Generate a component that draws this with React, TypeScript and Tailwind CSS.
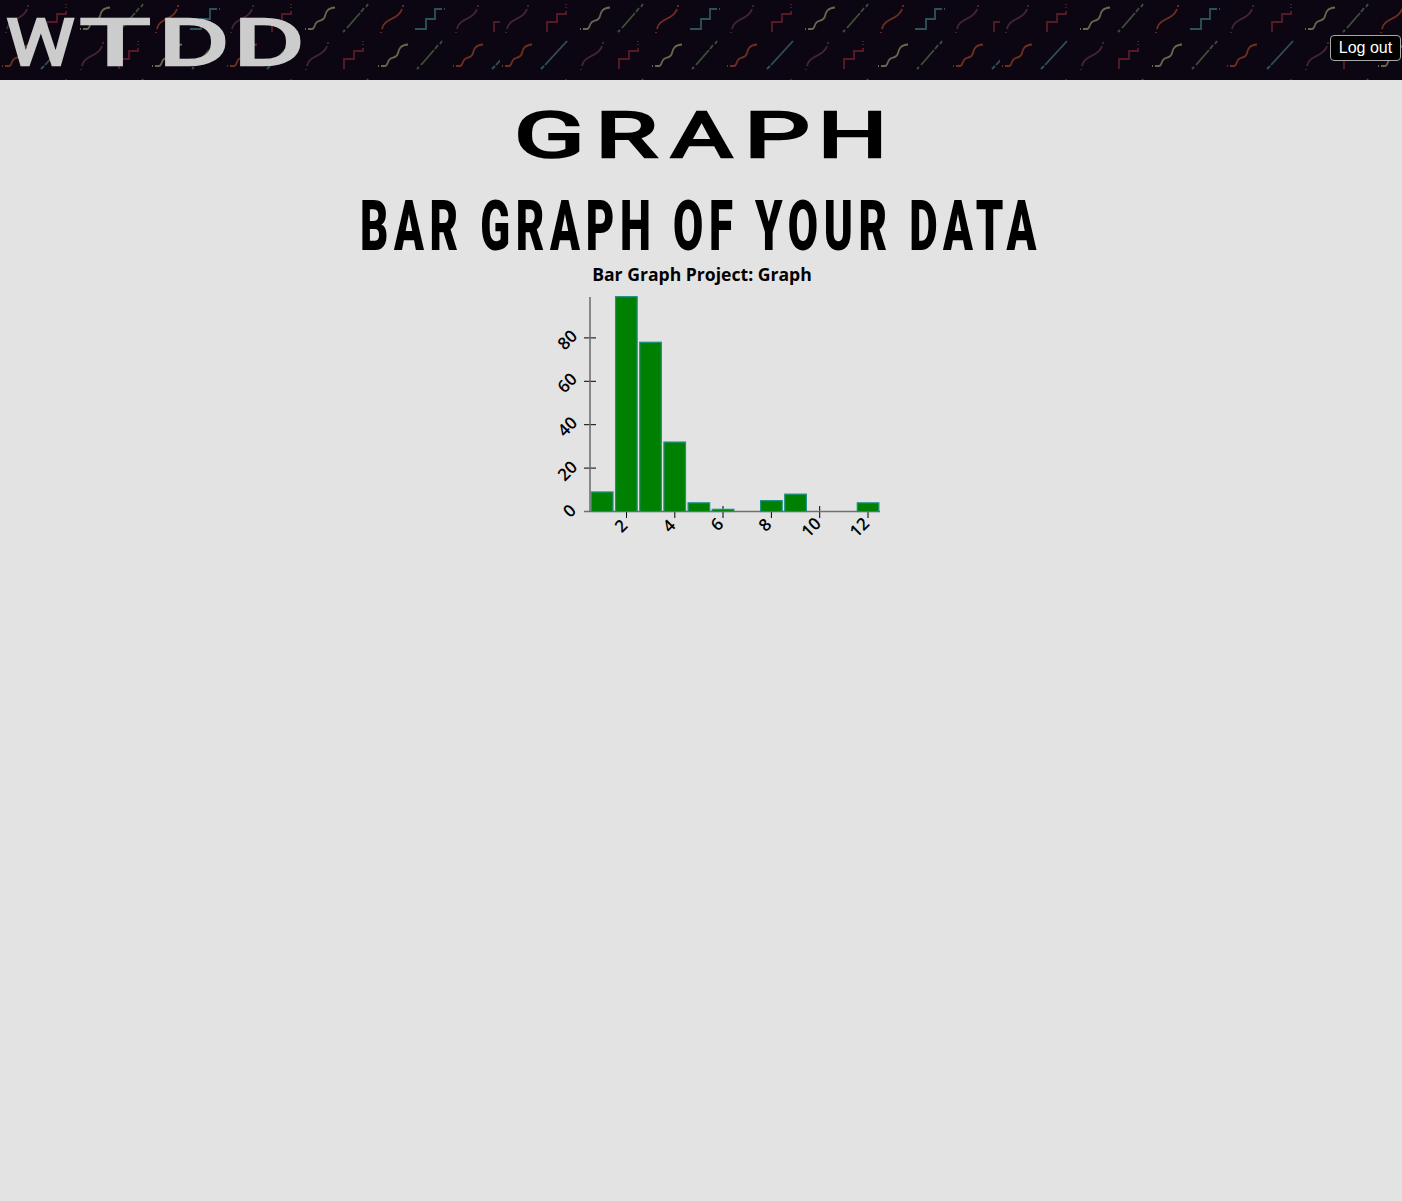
const topRow = [
    ['curve', 5, '#43262f'], ['stair', 46, '#571a24'], ['squiggle', 80, '#69664e'], ['line', 118, '#3d4f39'],
    ['curve', 155, '#6f2e1e'], ['stepRight', 190, '#2c5257'], ['curve', 230, '#43262f'], ['stair', 271, '#571a24'],
    ['squiggle', 305, '#69664e'], ['line', 343, '#3d4f39'], ['curve', 380, '#6f2e1e'], ['stepRight', 415, '#2c5257'],
    ['curve', 455, '#43262f'], ['stair', 493, '#571a24'],
];

const bottomRow = [
    ['squiggle', 2, '#6f2e1e'], ['solidLine', 41, '#2c5257'], ['curve', 80, '#43262f'], ['stair', 118, '#571a24'],
    ['squiggle', 152, '#69664e'], ['line', 192, '#3d4f39'], ['squiggle', 227, '#6f2e1e'], ['solidLine', 267, '#2c5257'],
    ['curve', 305, '#43262f'], ['stair', 343, '#571a24'], ['squiggle', 378, '#69664e'], ['line', 417, '#3d4f39'],
    ['squiggle', 453, '#6f2e1e'], ['solidLine', 492, '#2c5257'],
];

const shapes: Record<string, string> = {
    curve: 'M1 29v-1M2 25C3 18 10 16 15 13C20 10 21 8 22 5M23 3v-2',
    stair: 'M1 28V18H11V10H20V7M20 4V3M20 1V0',
    stepRight: 'M0 25H11V15H20V5H27M29 5H30',
    squiggle: 'M0 25H1M3 25H7C10 25 9 20 12 18C15 16 19 17 20 12C21 7 23 4 30 3.5',
    line: 'M0 28L2 26M4 24L17 9M18 8L21 4M23 3L25 0',
    solidLine: 'M0 28L3 25M4 24L26 0',
};

const bars = [9, 99, 78, 32, 4, 1, 0, 5, 8, 0, 0, 4];

const yTicks = [
    { label: '0', y: 510.5, lx: 569, ly: 509.5 },
    { label: '20', y: 467.1, lx: 567, ly: 469.5 },
    { label: '40', y: 423.7, lx: 567, ly: 425.2 },
    { label: '60', y: 380.3, lx: 566.7, ly: 381.5 },
    { label: '80', y: 336.9, lx: 567, ly: 338.5 },
];

const xTicks = [
    { label: '2', x: 626.5, lx: 620.5, ly: 524.5 },
    { label: '4', x: 674.8, lx: 668.5, ly: 524.5 },
    { label: '6', x: 723, lx: 716.7, ly: 523 },
    { label: '8', x: 771.4, lx: 764.5, ly: 523.5 },
    { label: '10', x: 819.7, lx: 810.7, ly: 526 },
    { label: '12', x: 868, lx: 859, ly: 526 },
];

const HeaderPattern = () => (
    <svg className="absolute inset-0 w-full h-full" aria-hidden="true">
        <defs>
            <pattern id="squiggles" width="500" height="75" patternUnits="userSpaceOnUse">
                {topRow.map(([shape, x, color], i) => (
                    <path key={i} d={shapes[shape as string]} transform={`translate(${x} 4)`} fill="none" stroke={color as string} strokeWidth="1.8" />
                ))}
                {bottomRow.map(([shape, x, color], i) => (
                    <path key={i} d={shapes[shape as string]} transform={`translate(${x} 41)`} fill="none" stroke={color as string} strokeWidth="1.8" />
                ))}
            </pattern>
        </defs>
        <rect width="100%" height="100%" fill="url(#squiggles)" />
    </svg>
);

const Chart = () => (
    <svg viewBox="501 260 400 290" className="w-[400px] h-[290px] block font-['Open_Sans',sans-serif]">
        <text x="702" y="280" textAnchor="middle" fontSize="17.6" fontWeight="700" fill="#000">Bar Graph Project: Graph</text>

        {yTicks.map(t => (
            <g key={t.label}>
                <line x1="584" x2="596" y1={t.y} y2={t.y} stroke="#000" />
                <text x={t.lx} y={t.ly} transform={`rotate(-45 ${t.lx} ${t.ly})`} textAnchor="middle" dominantBaseline="central" fontSize="17" fontWeight="600">{t.label}</text>
            </g>
        ))}
        {xTicks.map(t => (
            <g key={t.label}>
                <line x1={t.x} x2={t.x} y1="505" y2="517" stroke="#000" />
                <text x={t.lx} y={t.ly} transform={`rotate(-45 ${t.lx} ${t.ly})`} textAnchor="middle" dominantBaseline="central" fontSize="17" fontWeight="600">{t.label}</text>
            </g>
        ))}
        <line x1="590" x2="590" y1="296" y2="510.5" stroke="#707070" strokeWidth="1.6" />
        <line x1="584" x2="880" y1="510.5" y2="510.5" stroke="#707070" strokeWidth="1.6" />

        {bars.map((v, i) => (v > 0 ? (
            <rect key={i} x={591.4 + i * 24.17} y={510.5 - v * 2.17} width="21.6" height={v * 2.17} fill="#008000" stroke="#1f8f86" strokeWidth="1.2" />
        ) : null))}
    </svg>
);

export default function App() {
    return (
        <div className="min-h-[1201px] bg-[#e3e3e3] font-['Liberation_Sans',sans-serif]">
            <header className="relative h-20 bg-[#0c0612] flex items-end justify-between pb-[19px] pr-px">
                <HeaderPattern />
                <div className="relative self-start mt-5 ml-1.5 flex h-12 text-[64px] leading-[48px] font-normal text-[#cccccc] [-webkit-text-stroke:2.5px_#cccccc] font-['Roboto',sans-serif]">
                    <span className="w-[69px] flex justify-center"><span className="inline-block scale-x-[1.2]">W</span></span>
                    <span className="w-[70px] ml-[5px] flex justify-center"><span className="inline-block scale-x-[1.85]">T</span></span>
                    <span className="w-[68px] ml-[10px] flex justify-center"><span className="inline-block scale-x-[1.7]">D</span></span>
                    <span className="w-[68px] ml-[7px] flex justify-center"><span className="inline-block scale-x-[1.7]">D</span></span>
                </div>
                <button className="relative h-[26px] w-[71px] rounded-[4px] border border-[#a8a8a8] bg-black text-white text-base leading-none">
                    Log out
                </button>
            </header>

            <main className="flex flex-col items-center">
                <h1 className="mt-[32px] flex gap-[10px] h-[47px] text-[63px] leading-[47px] font-normal text-black [-webkit-text-stroke:2.5px_#000] font-['Roboto',sans-serif]">
                    <span className="w-[66px] flex justify-center"><span className="inline-block scale-x-[1.65] -translate-x-[2px]">G</span></span>
                    <span className="w-[65px] flex justify-center"><span className="inline-block scale-x-[1.6]">R</span></span>
                    <span className="w-[65px] flex justify-center"><span className="inline-block scale-x-[1.5]">A</span></span>
                    <span className="w-[65px] flex justify-center"><span className="inline-block scale-x-[1.65]">P</span></span>
                    <span className="w-[65px] flex justify-center"><span className="inline-block scale-x-[1.55] translate-x-[1px]">H</span></span>
                </h1>
                <h2 className="mt-[41px] h-[52px] flex items-center justify-center text-[70px] leading-[52px] font-black text-black tracking-[9px] whitespace-nowrap scale-x-[0.627] font-['Roboto',sans-serif]">
                    BAR GRAPH OF YOUR DATA
                </h2>
                <div className="mt-[9px]">
                    <Chart />
                </div>
            </main>
        </div>
    );
}
